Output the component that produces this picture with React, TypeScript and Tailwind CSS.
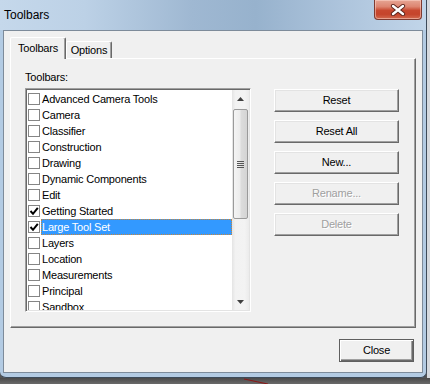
import React from "react";

const items: [string, boolean][] = [
  ["Advanced Camera Tools", false],
  ["Camera", false],
  ["Classifier", false],
  ["Construction", false],
  ["Drawing", false],
  ["Dynamic Components", false],
  ["Edit", false],
  ["Getting Started", true],
  ["Large Tool Set", true],
  ["Layers", false],
  ["Location", false],
  ["Measurements", false],
  ["Principal", false],
  ["Sandbox", false],
];

function Check() {
  return (
    <svg width="10" height="10" viewBox="0 0 10 10">
      <path d="M1.5 5 L4 7.8 L8.8 1.8" fill="none" stroke="#000" strokeWidth="2" />
    </svg>
  );
}

function Button({ label, disabled }: { label: string; disabled?: boolean }) {
  return (
    <div className="w-[125px] h-[23px] flex items-center justify-center bg-[#f0f0f0] border border-t-white border-l-white border-r-[#696969] border-b-[#696969] shadow-[inset_-1px_-1px_0_#a0a0a0,inset_1px_1px_0_#e3e3e3]">
      <span
        className={
          disabled
            ? "text-[#a0a0a0] [text-shadow:1px_1px_0_#ffffff]"
            : "text-black"
        }
      >
        {label}
      </span>
    </div>
  );
}

export default function App() {
  return (
    <div
      className="w-[430px] h-[384px] flex flex-col bg-[#555555] overflow-hidden text-[11px] leading-[13px] tracking-[-0.2px] text-black"
      style={{ fontFamily: '"Liberation Sans", Arial, sans-serif' }}
    >
      <div className="flex h-[378px]">
        <div className="relative w-[427px] h-[378px] flex flex-col bg-[#b3cbe3] border-r border-b border-[#3d4b5a] rounded-b-[6px]">
          {/* Title bar */}
          <div className="h-[30px] flex items-center pl-[4px] bg-[linear-gradient(90deg,#c5d8eb_0%,#bcd1e6_20%,#9fb8d2_45%,#97b2cd_60%,#adc4dc_80%,#c1d5e9_100%)]">
            <span className="text-[12px] leading-[14px] tracking-normal text-black">Toolbars</span>
          </div>
          <div className="absolute right-[4px] top-0 w-[48px] h-[20px] rounded-b-[4px] border border-t-0 border-[#7e3a30] bg-[linear-gradient(180deg,#e6a594_0%,#dd8571_35%,#c8482f_55%,#c5442b_75%,#d26a4f_100%)] shadow-[inset_0_0_0_1px_rgba(255,220,210,0.5)] flex items-center justify-center">
            <svg width="16" height="12" viewBox="0 0 16 12">
              <path d="M3 2 L13 10 M13 2 L3 10" stroke="#5a241c" strokeWidth="4.2" strokeLinecap="round" />
              <path d="M3 2 L13 10 M13 2 L3 10" stroke="#ffffff" strokeWidth="2.4" strokeLinecap="round" />
            </svg>
          </div>

          {/* Client area */}
          <div className="mx-[3px] h-[343px] border border-[#7d8b9a] bg-[#f0f0f0] flex flex-col pl-[6px] pt-[6px]">
            {/* Tabs */}
            <div className="flex items-end h-[21px]">
              <div className="relative z-10 -mb-px w-[56px] h-[22px] flex items-center justify-center bg-[#f0f0f0] border-l border-t border-white border-r border-r-[#696969] rounded-t-[2px] shadow-[inset_-1px_0_0_#a0a0a0]">
                Toolbars
              </div>
              <div className="w-[46px] h-[17px] flex items-center justify-center bg-[#f0f0f0] border-l border-t border-white border-r border-r-[#696969] rounded-t-[2px] shadow-[inset_-1px_0_0_#a0a0a0]">
                Options
              </div>
            </div>

            {/* Panel */}
            <div className="w-[406px] h-[270px] flex pl-[14px] pt-[12px] border border-t-white border-l-white border-r-[#696969] border-b-[#696969] shadow-[inset_-1px_-1px_0_#a0a0a0]">
              <div className="flex flex-col">
                <div className="h-[13px]">Toolbars:</div>
                <div className="mt-[4px] w-[226px] h-[224px] p-[1px] border border-t-[#a0a0a0] border-l-[#a0a0a0] border-r-white border-b-white shadow-[inset_1px_1px_0_#696969,inset_-1px_-1px_0_#e3e3e3] flex">
                  <div className="flex-1 bg-white overflow-hidden pt-[1px]">
                    {items.map(([name, checked]) => {
                      const selected = name === "Large Tool Set";
                      return (
                        <div key={name} className="h-[16px] flex items-center">
                          <div className="ml-[1px] w-[12px] h-[12px] border border-[#858585] bg-white flex items-center justify-center shrink-0">
                            {checked && <Check />}
                          </div>
                          <div
                            className={
                              selected
                                ? "ml-px flex-1 h-[16px] flex items-center border border-dotted border-[#c8863a] bg-[#3399ff] text-white"
                                : "ml-px flex-1 h-[16px] flex items-center border border-transparent"
                            }
                          >
                            <span className="leading-[14px]">{name}</span>
                          </div>
                        </div>
                      );
                    })}
                  </div>
                  {/* Scrollbar */}
                  <div className="w-[17px] flex flex-col bg-[linear-gradient(90deg,#e4e4e4_0%,#f2f2f2_20%,#f3f3f3_75%,#ebebeb_100%)]">
                    <div className="h-[17px] flex items-center justify-center">
                      <svg width="7" height="4" viewBox="0 0 7 4">
                        <path d="M3.5 0 L7 4 L0 4 Z" fill="#3f3f3f" />
                      </svg>
                    </div>
                    <div className="mt-[2px] mx-[1px] h-[110px] rounded-[2px] border border-[#9a9a9a] bg-[linear-gradient(90deg,#f4f4f4_0%,#ececec_45%,#dcdcdc_55%,#d4d4d4_100%)] flex items-center justify-center">
                      <svg width="7" height="7" viewBox="0 0 7 7">
                        <path d="M0 0.5 H7 M0 2.5 H7 M0 4.5 H7 M0 6.5 H7" stroke="#555" strokeWidth="1" />
                      </svg>
                    </div>
                    <div className="flex-1" />
                    <div className="h-[17px] flex items-center justify-center">
                      <svg width="7" height="4" viewBox="0 0 7 4">
                        <path d="M0 0 L7 0 L3.5 4 Z" fill="#3f3f3f" />
                      </svg>
                    </div>
                  </div>
                </div>
              </div>

              <div className="ml-[23px] mt-[18px] flex flex-col gap-[8px]">
                <Button label="Reset" />
                <Button label="Reset All" />
                <Button label="New..." />
                <Button label="Rename..." disabled />
                <Button label="Delete" disabled />
              </div>
            </div>

            {/* Close row */}
            <div className="mt-[11px] flex justify-end pr-[8px]">
              <div className="w-[75px] h-[23px] flex items-center justify-center bg-[#f0f0f0] border border-[#5f5f5f] shadow-[inset_1px_1px_0_#ffffff,inset_-1px_-1px_0_#696969,inset_-2px_-2px_0_#a0a0a0]">
                Close
              </div>
            </div>
          </div>
          <div className="flex-1" />
        </div>
        <div className="flex-1 bg-[#d5d9de]" />
      </div>
      <div className="h-[6px] flex bg-[linear-gradient(180deg,#4a4a4a,#6a6a6a)]">
        <svg className="ml-[244px]" width="24" height="6" viewBox="0 0 24 6">
          <path d="M0 1 L24 6" stroke="#8a1a1a" strokeWidth="1.2" />
        </svg>
      </div>
    </div>
  );
}
